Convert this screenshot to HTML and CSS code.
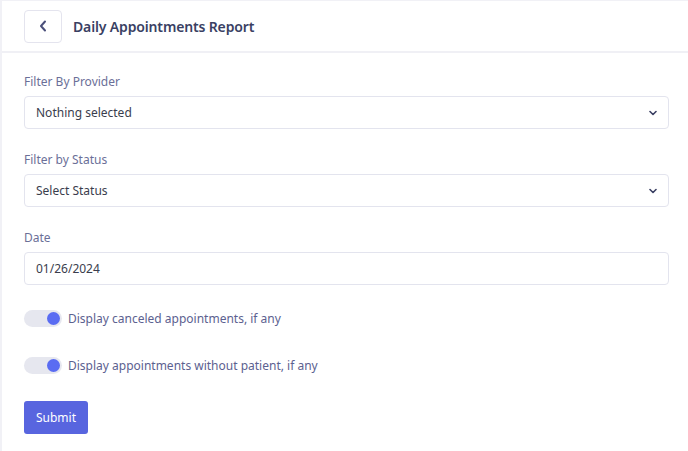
FILE: index.html
```html
<!DOCTYPE html>
<html>
<head>
  <title>Daily Appointments Report</title>
  <link rel="stylesheet" href="styles.css">
</head>
<body>
  <div class="card">
    <div class="card-header">
      <button class="btn-back" aria-label="Back">
        <svg width="10" height="14" viewBox="0 0 10 14"><path d="M7 2.5 L3 7 L7 11.5" fill="none" stroke="#4a4f7a" stroke-width="2" stroke-linecap="round" stroke-linejoin="round"/></svg>
      </button>
      <h1>Daily Appointments Report</h1>
    </div>

    <form class="card-body">
      <div class="field">
        <label>Filter By Provider</label>
        <div class="select">
          <span>Nothing selected</span>
          <svg width="8" height="6" viewBox="0 0 8 6"><path d="M1 1.5 L4 4.5 L7 1.5" fill="none" stroke="#3a3f63" stroke-width="1.6" stroke-linecap="round" stroke-linejoin="round"/></svg>
        </div>
      </div>

      <div class="field">
        <label>Filter by Status</label>
        <div class="select">
          <span>Select Status</span>
          <svg width="8" height="6" viewBox="0 0 8 6"><path d="M1 1.5 L4 4.5 L7 1.5" fill="none" stroke="#3a3f63" stroke-width="1.6" stroke-linecap="round" stroke-linejoin="round"/></svg>
        </div>
      </div>

      <div class="field">
        <label>Date</label>
        <div class="select">
          <span>01/26/2024</span>
        </div>
      </div>

      <div class="switch-row">
        <span class="switch"><span class="knob"></span></span>
        <span>Display canceled appointments, if any</span>
      </div>

      <div class="switch-row">
        <span class="switch"><span class="knob"></span></span>
        <span>Display appointments without patient, if any</span>
      </div>

      <div class="actions">
        <button type="button" class="btn-submit">Submit</button>
      </div>
    </form>
  </div>
</body>
</html>
```

FILE: styles.css
```css
body {
  margin: 0;
  background-color: #f1f1f6;
  font-family: 'Noto Sans', 'Inter', sans-serif;
}
.card {
  margin: 1px 0 0 2px;
  background-color: white;
  min-height: 450px;
}
.card-header {
  display: flex;
  align-items: center;
  gap: 11px;
  height: 50px;
  padding-left: 22px;
  border-bottom: 2px solid #f0f0f5;
}
.card-header h1 {
  margin: 0;
  font-size: 14px;
  font-weight: 600;
  letter-spacing: -0.15px;
  color: #3a3f63;
}
.btn-back {
  display: flex;
  align-items: center;
  justify-content: center;
  width: 38px;
  height: 33px;
  background: white;
  border: 1px solid #e4e4ee;
  border-radius: 4px;
  padding: 0;
}
.card-body {
  padding: 20px 19px 0 22px;
}
.field {
  margin-bottom: 22px;
}
.field label {
  display: block;
  font-size: 12px;
  color: #6b6f98;
  margin-bottom: 6px;
}
.select {
  display: flex;
  align-items: center;
  justify-content: space-between;
  height: 31px;
  padding: 0 11px;
  border: 1px solid #e3e4ee;
  border-radius: 4px;
  font-size: 12px;
  color: #3a3d4d;
}
.switch-row {
  display: flex;
  align-items: center;
  gap: 6px;
  font-size: 12px;
  color: #5c6190;
  margin-top: 23px;
  height: 20px;
}
.switch-row + .switch-row {
  margin-top: 27px;
}
.switch {
  display: flex;
  align-items: center;
  justify-content: flex-end;
  width: 38px;
  height: 17px;
  padding-right: 2px;
  box-sizing: border-box;
  border-radius: 9px;
  background-color: #e6e7ef;
}
.knob {
  width: 13px;
  height: 13px;
  border-radius: 50%;
  background-color: #5a6cf2;
}
.actions {
  margin-top: 26px;
}
.btn-submit {
  width: 64px;
  height: 33px;
  border: none;
  border-radius: 3px;
  background-color: #5865df;
  color: white;
  font-family: inherit;
  font-size: 12px;
}
```
